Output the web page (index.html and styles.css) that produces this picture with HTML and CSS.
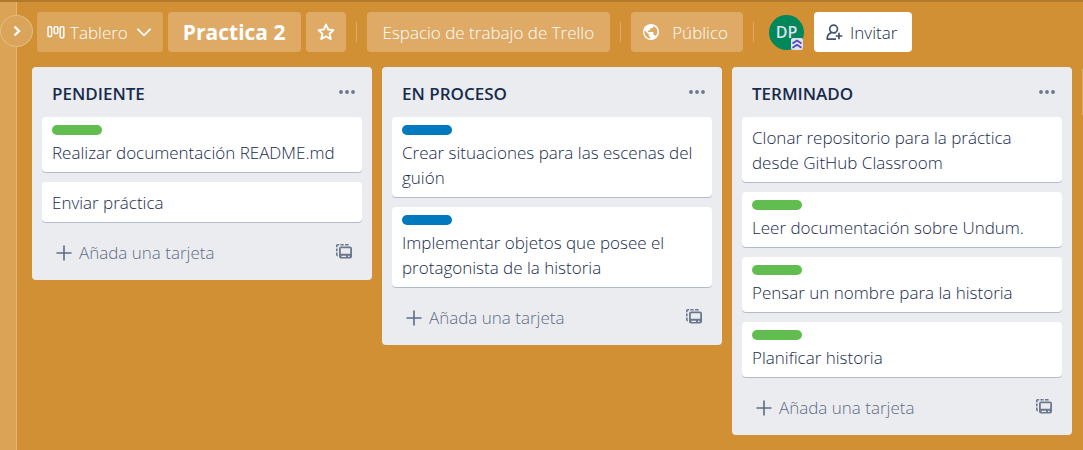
FILE: index.html
```html
<!DOCTYPE html>
<html lang="es">
<head>
<meta charset="utf-8">
<meta name="viewport" content="width=device-width, initial-scale=1">
<title>Practica 2</title>
<link rel="stylesheet" href="styles.css">
</head>
<body>
<svg class="sprite" aria-hidden="true">
  <symbol id="plus" viewBox="0 0 16 16"><path d="M8 .5v15M.5 8h15" fill="none" stroke="currentColor" stroke-width="1.6"/></symbol>
  <symbol id="dots" viewBox="0 0 16 4"><g fill="currentColor"><circle cx="2" cy="2" r="1.9"/><circle cx="8" cy="2" r="1.9"/><circle cx="14" cy="2" r="1.9"/></g></symbol>
  <symbol id="template" viewBox="0 0 16 15"><path fill="currentColor" fill-rule="evenodd" d="M5 2.500h9a2 2 0 0 1 2 2v8a2 2 0 0 1-2 2H5a2 2 0 0 1-2-2v-8a2 2 0 0 1 2-2zM4.800 4.300v5.500h9.400V4.300zM5.500 11.700v1.200H10v-1.200zM12 11.700v1.200h1.600v-1.200z"/><path d="M.8 3.200V1.800a1 1 0 0 1 1-1h1.400M4.400.8h3.300M9 .8h3.600M.8 4.600v2.600M.8 8.600v2a1 1 0 0 0 1 1" fill="none" stroke="currentColor" stroke-width="1.600"/></symbol>
</svg>
<aside class="rail">
  <button class="rail-toggle" aria-label="Abrir menú lateral"><svg width="8" height="12" viewBox="0 0 8 12"><path d="M1.500 1.500 6 6l-4.500 4.500" fill="none" stroke="currentColor" stroke-width="2.400"/></svg></button>
</aside>
<main class="board">
  <header class="bar">
    <button class="btn view">
      <svg width="18" height="14" viewBox="0 0 18 14"><g fill="none" stroke="currentColor" stroke-width="1.500"><rect x="1" y="1.800" width="3.600" height="9.800" rx="1"/><rect x="7.200" y="1.800" width="3.600" height="6.600" rx="1"/><rect x="13.200" y="1.800" width="3.600" height="11" rx="1"/></g></svg>
      <span>Tablero</span>
      <svg class="chevron" width="14" height="9" viewBox="0 0 14 9"><path d="m1 1.300 6 6 6-6" fill="none" stroke="currentColor" stroke-width="1.800" stroke-linecap="round"/></svg>
    </button>
    <h1 class="btn title">Practica 2</h1>
    <button class="btn square" aria-label="Marcar como favorito"><svg width="18" height="18" viewBox="0 0 18 18"><path d="m9 1.600 2.200 4.900 5.300.6-3.900 3.600 1.100 5.300L9 13.400 4.300 16l1.100-5.300L1.500 7.100l5.300-.6z" fill="none" stroke="currentColor" stroke-width="1.900" stroke-linejoin="round"/></svg></button>
    <span class="divider"></span>
    <button class="btn space">Espacio de trabajo de Trello</button>
    <span class="divider"></span>
    <button class="btn public">
      <svg width="16" height="16" viewBox="0 0 16 16"><circle cx="8" cy="8" r="8" fill="currentColor"/><path d="M1.700 6.500 5.800 10.600v.9c0 .8.600 1.500 1.500 1.500v1.400C3.500 14 1.400 11 1.400 8c0-.5.100-1 .3-1.500zM10.400 2.100v.500c0 .900-.7 1.600-1.600 1.600H7.200v1.500c0 .500-.3.800-.8.800H4.900V8h4.800c.500 0 .8.300.8.800v2.300h.8c.7 0 1.300.5 1.500 1.100 2.800-3.200 2.200-8-2.400-10.100z" fill="#dca966"/></svg>
      <span>Público</span>
    </button>
    <span class="divider"></span>
    <div class="avatar">DP
      <svg class="badge" width="12" height="12" viewBox="0 0 12 12"><rect width="12" height="12" rx="2" fill="#dfe1f2"/><path d="m1.500 5.500 4.500-3 4.500 3M1.500 9.700l4.500-3 4.500 3" fill="none" stroke="#5145bd" stroke-width="1.700"/></svg>
    </div>
    <button class="btn invite">
      <svg width="17" height="17" viewBox="0 0 17 17"><g fill="none" stroke="#42526e" stroke-width="1.700"><circle cx="7.600" cy="5" r="3.900"/><path d="M10 15.200H1.300c-.3-3.500 1.200-5.600 4.300-6.600M8.700 8.700l1 .4M13 8.700v6.600M9.700 12h6.600"/></g></svg>
      <span>Invitar</span>
    </button>
  </header>
  <div class="lists">
    <section class="list">
      <div class="list-head"><h2>PENDIENTE</h2><button class="icon" aria-label="Acciones de lista"><svg width="16" height="4"><use href="#dots"/></svg></button></div>
      <article class="card"><span class="label green"></span><p>Realizar documentación README.md</p></article>
      <article class="card"><p>Enviar práctica</p></article>
      <div class="list-foot"><button class="add"><svg width="16" height="16"><use href="#plus"/></svg>Añada una tarjeta</button><button class="icon" aria-label="Crear desde plantilla"><svg width="16" height="15"><use href="#template"/></svg></button></div>
    </section>
    <section class="list">
      <div class="list-head"><h2>EN PROCESO</h2><button class="icon" aria-label="Acciones de lista"><svg width="16" height="4"><use href="#dots"/></svg></button></div>
      <article class="card"><span class="label blue"></span><p>Crear situaciones para las escenas del guión</p></article>
      <article class="card"><span class="label blue"></span><p>Implementar objetos que posee el protagonista de la historia</p></article>
      <div class="list-foot"><button class="add"><svg width="16" height="16"><use href="#plus"/></svg>Añada una tarjeta</button><button class="icon" aria-label="Crear desde plantilla"><svg width="16" height="15"><use href="#template"/></svg></button></div>
    </section>
    <section class="list">
      <div class="list-head"><h2>TERMINADO</h2><button class="icon" aria-label="Acciones de lista"><svg width="16" height="4"><use href="#dots"/></svg></button></div>
      <article class="card"><p>Clonar repositorio para la práctica desde GitHub Classroom</p></article>
      <article class="card"><span class="label green"></span><p>Leer documentación sobre Undum.</p></article>
      <article class="card"><span class="label green"></span><p>Pensar un nombre para la historia</p></article>
      <article class="card"><span class="label green"></span><p>Planificar historia</p></article>
      <div class="list-foot"><button class="add"><svg width="16" height="16"><use href="#plus"/></svg>Añada una tarjeta</button><button class="icon" aria-label="Crear desde plantilla"><svg width="16" height="15"><use href="#template"/></svg></button></div>
    </section>
    <div class="next-list"></div>
  </div>
</main>
</body>
</html>
```
FILE: styles.css
```css
* { box-sizing: border-box; }
body {
  margin: 0;
  min-height: 100vh;
  display: flex;
  background: #d29034;
  border-top: 2px solid #b1792b;
  color: #172b4d;
  font: 300 17px/25px "Open Sans", "Noto Sans", sans-serif;
  overflow-x: hidden;
}
h1, h2, p { margin: 0; }
button { font: inherit; color: inherit; border: 0; background: none; padding: 0; }
svg { display: block; flex: none; }
.sprite { position: absolute; width: 0; height: 0; }

.rail { position: relative; flex: 0 0 17px; background: #daa355; border-right: 1px solid #e2b67a; }
.rail-toggle {
  position: absolute; top: 13px; left: 0;
  width: 33px; height: 32px;
  display: flex; align-items: center; justify-content: center;
  border: 1px solid #e4bb82; border-radius: 50%;
  background: #daa45a; color: #fff;
}

.board { flex: 1; min-width: 0; padding-top: 10px; }
.bar { display: flex; align-items: center; gap: 5px; padding-left: 20px; margin-bottom: 15px; color: #fff; white-space: nowrap; }
.btn { height: 40px; display: flex; align-items: center; border-radius: 4px; background: #deaa66; }
.view { padding: 0 12px 0 10px; gap: 5px; background: #dca65d; }
.chevron { margin-left: 4px; }
.title { padding: 0 15px; font-size: 21px; font-weight: 700; }
.square { width: 40px; justify-content: center; }
.divider { width: 1px; height: 20px; margin: 0 5px; background: #deaa66; }
.space { padding: 0 16px; }
.public { padding: 0 15px 0 12px; gap: 13px; }
.avatar {
  position: relative;
  width: 35px; height: 35px; margin: 0 5px;
  border-radius: 50%;
  background: #00875a; color: #dfe1f2;
  font-size: 16px; font-weight: 600; line-height: 35px; text-align: center;
}
.badge { position: absolute; right: 1px; bottom: 0; }
.invite { padding: 0 15px 0 12px; gap: 7px; background: #fff; color: #172b4d; }

.lists { display: grid; grid-template-columns: repeat(3, minmax(0, 1fr)) 1px; gap: 10px; align-items: start; padding-left: 15px; }
.list { background: #ebecf0; border-radius: 4px; padding: 0 10px; }
.list-head { display: flex; align-items: center; justify-content: space-between; height: 50px; padding: 2px 7px 0 10px; }
.list-head h2 { font-size: 17px; font-weight: 600; }
.icon { color: #6b778c; }
.list-head .icon { padding-bottom: 2px; }
.card { background: #fff; border-radius: 4px; box-shadow: 0 1px 0 #b3bac9; padding: 8px 10px 7px; margin-bottom: 10px; }
.label { display: block; width: 50px; height: 10px; margin-bottom: 5px; border-radius: 5px; }
.green { background: #61bd4f; }
.blue { background: #0079bf; }
.list-foot { display: flex; align-items: center; justify-content: space-between; height: 48px; padding: 0 10px 7px 14px; color: #5e6c84; }
.list-foot .icon { padding-bottom: 2px; }
.add { display: flex; align-items: center; gap: 7px; }
.next-list { height: 46px; margin-top: 2px; background: #deaa66; }
```
